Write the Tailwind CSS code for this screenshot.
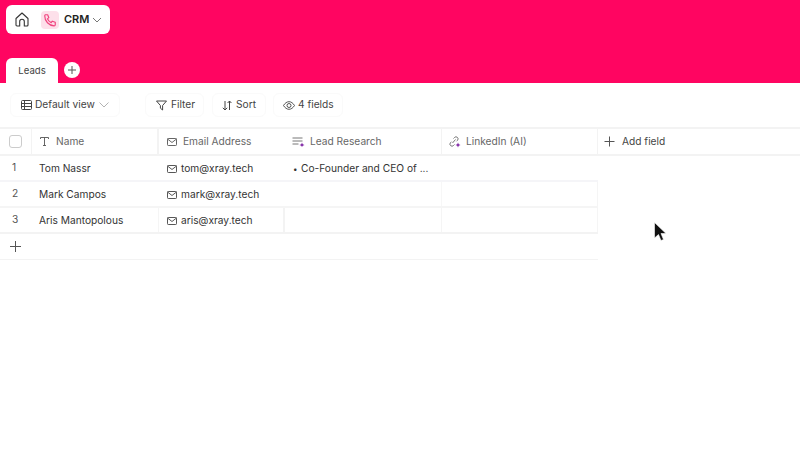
<!DOCTYPE html>
<html>
<head>
<title>CRM Leads</title>
<script src="https://cdn.jsdelivr.net/npm/@tailwindcss/browser@4"></script>
</head>
<body class="bg-white font-['Inter',sans-serif] text-[#2c2c2c] text-[10.2px] overflow-hidden">
<div class="relative w-[800px] h-[450px] overflow-hidden">
  <!-- header -->
  <div class="h-[83px] bg-[#ff0561] flex flex-col justify-between pt-[5px]">
    <div class="ml-[6px] w-[104px] h-[29px] bg-white rounded-[6px] flex items-center">
      <svg class="ml-[9px] w-[14px] h-[15px]" viewBox="0 0 14 15" fill="none" stroke="#333" stroke-width="1.1" stroke-linejoin="round"><path d="M1 6.5 7 1l6 5.5V13a1 1 0 0 1-1 1H9.3V9.5a2.3 2.3 0 0 0-4.600 0V14H2a1 1 0 0 1-1-1z"/></svg>
      <div class="ml-[12px] w-[18px] h-[18px] rounded-[4px] bg-[#fde0ea] flex items-center justify-center">
        <svg class="w-[14px] h-[14px]" viewBox="0 0 24 24" fill="none" stroke="#f0447f" stroke-width="2" stroke-linecap="round" stroke-linejoin="round"><path d="M4 3h4l2 5-2.500 2a13 13 0 0 0 6.500 6.500l2-2.500 5 2v4a2 2 0 0 1-2 2A17 17 0 0 1 3 5a2 2 0 0 1 1-2z"/></svg>
      </div>
      <span class="ml-[5px] text-[11px] font-semibold text-[#222]">CRM</span>
      <svg class="ml-[3px] w-[10px] h-[6px]" viewBox="0 0 10 6" fill="none" stroke="#777" stroke-width="1"><path d="M1 1l4 4 4-4"/></svg>
    </div>
    <div class="ml-[6px] flex items-center">
      <div class="w-[52px] h-[25px] pt-[1px] bg-white rounded-t-[6px] flex items-center justify-center text-[9.6px] text-[#444]">Leads</div>
      <div class="ml-[6px] w-[16px] h-[16px] mb-[1px] rounded-full bg-white flex items-center justify-center">
        <svg class="w-[10px] h-[10px]" viewBox="0 0 10 10" stroke="#555" stroke-width="1"><path d="M5 1v8M1 5h8"/></svg>
      </div>
    </div>
  </div>

  <!-- toolbar -->
  <div class="h-[44px] flex items-center text-[#444]">
    <div class="ml-[10px] w-[110px] h-[24px] rounded-[6px] border border-[#fafafa] flex items-center">
      <svg class="ml-[10px] w-[11px] h-[10px]" viewBox="0 0 11 10" fill="none" stroke="#444" stroke-width="1"><rect x=".5" y=".5" width="10" height="9" rx="1"/><path d="M.5 3.500h10M.5 6.500h10M3.500.5v9"/></svg>
      <span class="ml-[3px]">Default view</span>
      <svg class="ml-[4px] w-[10px] h-[6px]" viewBox="0 0 10 6" fill="none" stroke="#aaa" stroke-width=".9"><path d="M.5.5l4.500 4.500 4.500-4.500"/></svg>
    </div>
    <div class="ml-[25px] w-[59px] h-[24px] rounded-[6px] border border-[#fafafa] flex items-center">
      <svg class="ml-[10px] w-[11px] h-[11px]" viewBox="0 0 11 11" fill="none" stroke="#444" stroke-width="1" stroke-linejoin="round"><path d="M.5 1h10L6.600 5.500V10L4.400 8.200V5.500z"/></svg>
      <span class="ml-[4px]">Filter</span>
    </div>
    <div class="ml-[8px] w-[54px] h-[24px] rounded-[6px] border border-[#fafafa] flex items-center">
      <svg class="ml-[9px] w-[10px] h-[11px]" viewBox="0 0 10 11" fill="none" stroke="#444" stroke-width="1"><path d="M3 1v9M.8 7.800 3 10l2.200-2.200M7.500 10V1M5.600 3 7.500 1l1.900 2"/></svg>
      <span class="ml-[4px]">Sort</span>
    </div>
    <div class="ml-[7px] w-[70px] h-[24px] rounded-[6px] border border-[#fafafa] flex items-center">
      <svg class="ml-[9px] w-[12px] h-[9px]" viewBox="0 0 12 9" fill="none" stroke="#444" stroke-width=".9"><path d="M.5 4.500C2 2 4 .7 6 .7s4 1.300 5.500 3.800C10 7 8 8.300 6 8.300S2 7 .5 4.500z"/><circle cx="6" cy="4.500" r="2"/></svg>
      <span class="ml-[3px]">4 fields</span>
    </div>
  </div>

  <!-- table -->
  <div class="border-t-2 border-[#f3f3f3]">
    <div class="h-[27px] flex border-b-2 border-[#f3f3f3] text-[#666]">
      <div class="w-[32px] flex items-center justify-center border-r border-[#f3f3f3]">
        <div class="w-[13px] h-[13px] rounded-[3px] border border-[#ccc]"></div>
      </div>
      <div class="w-[127px] flex items-center pl-[7px] border-r-2 border-[#f3f3f3]">
        <svg class="ml-[1px] w-[9px] h-[9px]" viewBox="0 0 9 9" fill="none" stroke="#555" stroke-width=".9"><path d="M.5 2V.5h8V2M4.500.5v8M3 8.500h3"/></svg>
        <span class="ml-[7px]">Name</span>
      </div>
      <div class="w-[126px] flex items-center pl-[8px]">
        <svg class="w-[10px] h-[8px]" viewBox="0 0 10 8" fill="none" stroke="#555" stroke-width=".9"><rect x=".5" y=".5" width="9" height="7" rx=".8"/><path d="M.5 1 5 4.500 9.500 1"/></svg>
        <span class="ml-[6px]">Email Address</span>
      </div>
      <div class="w-[157px] flex items-center pl-[7px] border-r border-[#f3f3f3]">
        <svg class="w-[13px] h-[10px]" viewBox="0 0 13 10" fill="none"><path d="M.5 1h10M.5 4h10M.5 7h6" stroke="#666" stroke-width=".9"/><path d="M10 5.500l.7 1.800 1.800.7-1.800.7-.7 1.300-.7-1.300-1.800-.7 1.800-.7z" fill="#7b1fa2"/></svg>
        <span class="ml-[5px]">Lead Research</span>
      </div>
      <div class="w-[156px] flex items-center pl-[6px] border-r border-[#f3f3f3]">
        <svg class="w-[13px] h-[12px]" viewBox="0 0 13 12" fill="none"><path d="M4.500 7 7.500 3.500M5.500 2.500l1-1a2 2 0 0 1 3 2.800l-1 1M6.500 8.500l-1 1a2 2 0 0 1-3-2.800l1-1" stroke="#666" stroke-width=".9"/><path d="M10 6.500l.7 1.800 1.800.7-1.800.7-.7 1.800-.7-1.800-1.800-.7 1.800-.7z" fill="#7b1fa2"/></svg>
        <span class="ml-[5px]">LinkedIn (AI)</span>
      </div>
      <div class="flex-1 flex items-center pl-[6px] text-[#444]">
        <svg class="w-[11px] h-[11px]" viewBox="0 0 11 11" stroke="#555" stroke-width="1"><path d="M5.500.5v10M.5 5.500h10"/></svg>
        <span class="ml-[7px]">Add field</span>
      </div>
    </div>

    <div class="w-[598px] text-[#333]">
      <div class="h-[26px] flex border-b-2 border-[#f5f5f8]">
        <div class="w-[32px] pl-[12px] pt-[4px] text-[#555]">1</div>
        <div class="w-[127px] pl-[7px] pt-[1px] flex items-center">Tom Nassr</div>
        <div class="w-[126px] pl-[8px] pt-[1px] flex items-center">
          <svg class="w-[10px] h-[8px]" viewBox="0 0 10 8" fill="none" stroke="#444" stroke-width=".9"><rect x=".5" y=".5" width="9" height="7" rx=".8"/><path d="M.5 1 5 4.500 9.500 1"/></svg>
          <span class="ml-[4px]">tom@xray.tech</span>
        </div>
        <div class="w-[157px] pl-[8px] pt-[1px] flex items-center whitespace-nowrap">
          <span class="w-[8px] text-[8px]">•</span><span>Co-Founder and CEO of ...</span>
        </div>
        <div class="flex-1"></div>
      </div>
      <div class="h-[26px] flex border-b-2 border-[#f5f5f5]">
        <div class="w-[32px] pl-[12px] pt-[4px] text-[#555]">2</div>
        <div class="w-[127px] pl-[7px] pt-[1px] flex items-center">Mark Campos</div>
        <div class="w-[126px] pl-[8px] pt-[1px] flex items-center">
          <svg class="w-[10px] h-[8px]" viewBox="0 0 10 8" fill="none" stroke="#444" stroke-width=".9"><rect x=".5" y=".5" width="9" height="7" rx=".8"/><path d="M.5 1 5 4.500 9.500 1"/></svg>
          <span class="ml-[4px]">mark@xray.tech</span>
        </div>
        <div class="w-[157px] border-r border-[#f7f7f7]"></div>
        <div class="flex-1 border-r border-[#f5f5f5]"></div>
      </div>
      <div class="h-[26px] flex border-b-2 border-[#f3f3f3]">
        <div class="w-[32px] pl-[12px] pt-[4px] text-[#555]">3</div>
        <div class="w-[127px] pl-[7px] pt-[1px] flex items-center border-r border-[#f5f5f5]">Aris Mantopolous</div>
        <div class="w-[126px] pl-[8px] pt-[1px] flex items-center border-r-2 border-[#f3f3f3]">
          <svg class="w-[10px] h-[8px]" viewBox="0 0 10 8" fill="none" stroke="#444" stroke-width=".9"><rect x=".5" y=".5" width="9" height="7" rx=".8"/><path d="M.5 1 5 4.500 9.500 1"/></svg>
          <span class="ml-[4px]">aris@xray.tech</span>
        </div>
        <div class="w-[157px] border-r border-[#f5f5f5]"></div>
        <div class="flex-1 border-r border-[#f5f5f5]"></div>
      </div>
      <div class="h-[26px] flex items-center border-b border-[#f3f3f3] pl-[10px]">
        <svg class="w-[11px] h-[11px]" viewBox="0 0 11 11" stroke="#555" stroke-width="1"><path d="M5.500 0v11M0 5.500h11"/></svg>
      </div>
    </div>
  </div>

  <!-- mouse pointer over the page -->
  <svg class="absolute left-[654px] top-[222px] w-[13px] h-[21px]" viewBox="0 0 13 21"><path d="M.5 .5V16l4-3.500 2.500 6 2.500-1-2.500-6H12z" fill="#111" stroke="#fff" stroke-width=".6"/></svg>
</div>
</body>
</html>
